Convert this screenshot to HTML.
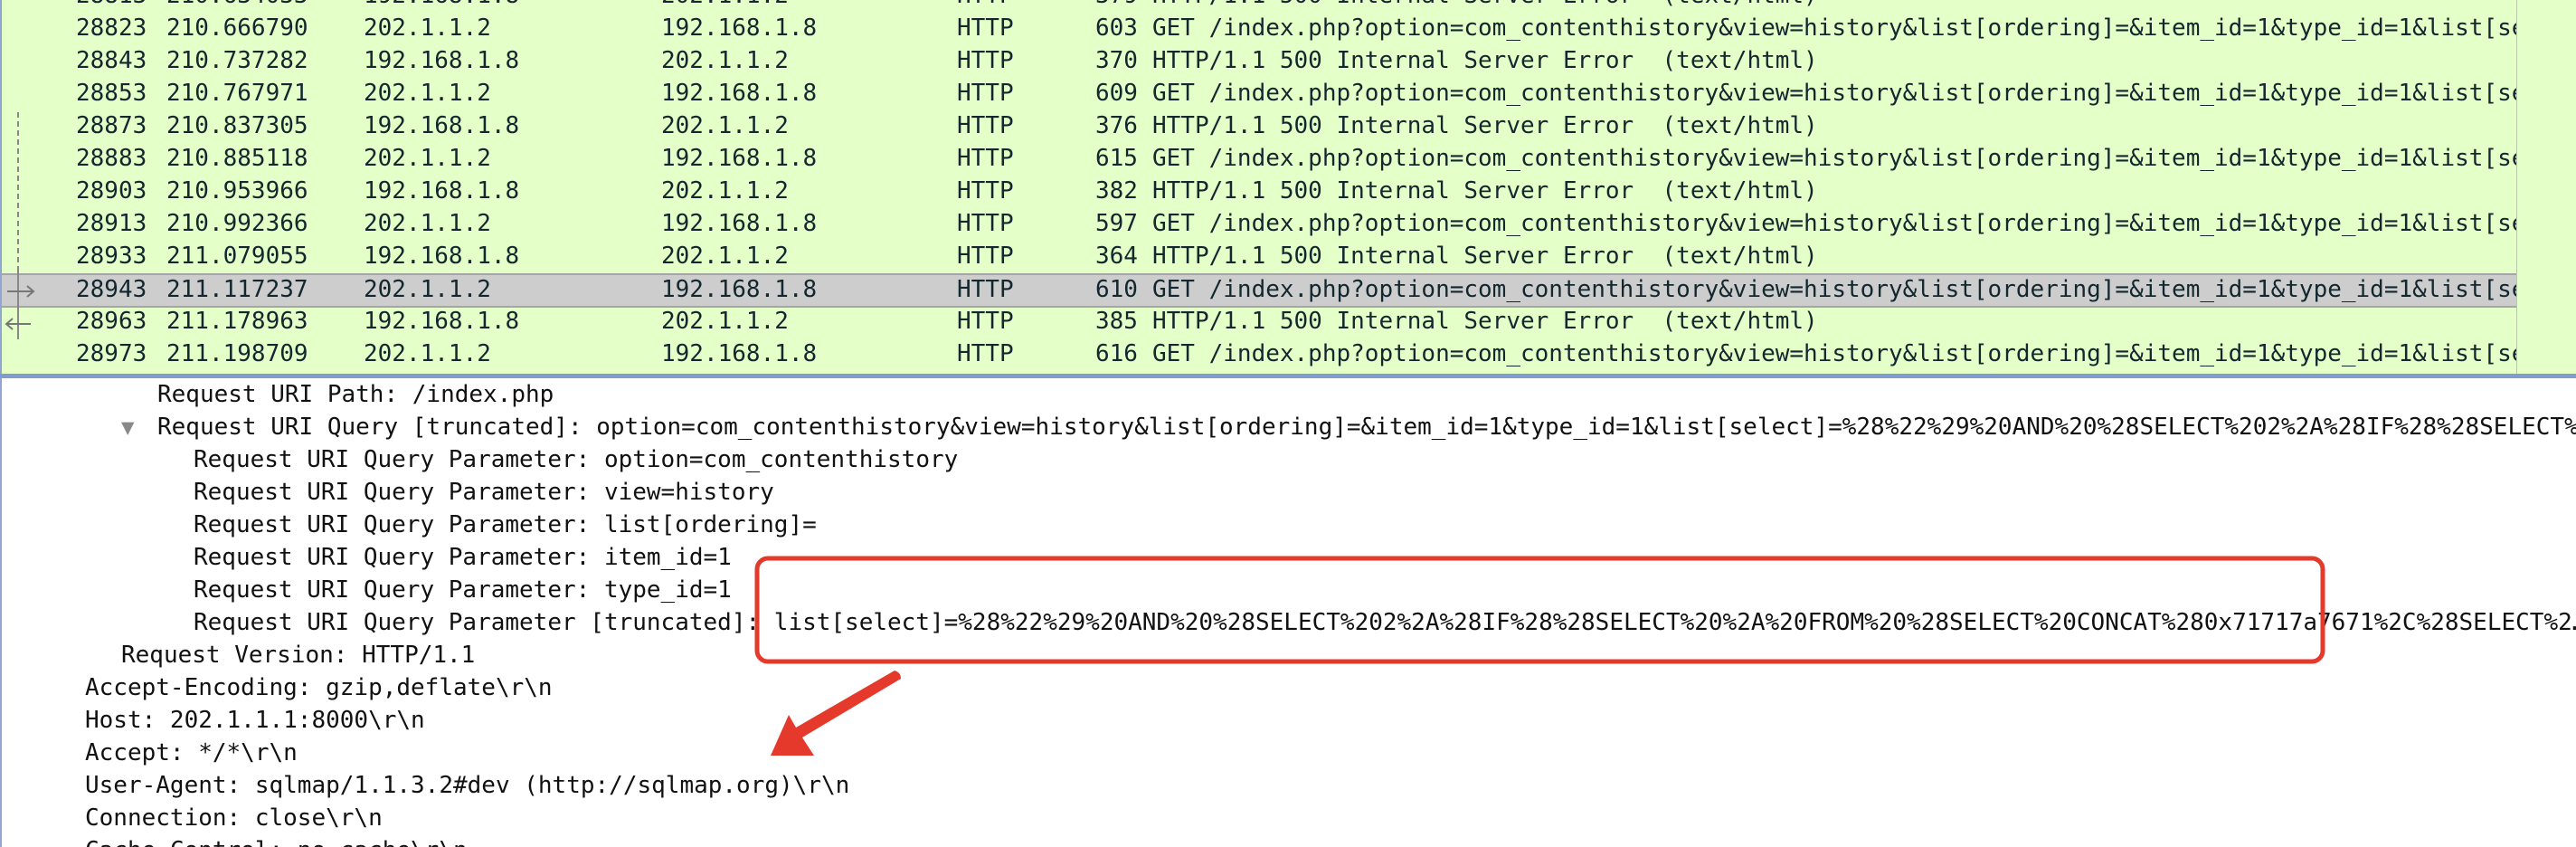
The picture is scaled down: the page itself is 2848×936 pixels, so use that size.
<!DOCTYPE html>
<html><head><meta charset="utf-8">
<style>
html,body{margin:0;padding:0;}
body{width:2848px;height:936px;overflow:hidden;background:#fff;position:relative;font-family:"DejaVu Sans Mono","Liberation Mono",monospace;font-size:26px;color:#12272e;}
#list{position:absolute;left:0;top:0;width:2848px;height:413px;background:#e4ffc7;overflow:hidden;border-left:2px solid #8fa7d0;box-sizing:border-box;}
.r{position:absolute;left:0;width:2780px;height:36px;line-height:36px;white-space:pre;overflow:hidden;}
.r span{position:absolute;top:0;}
.c1{left:82px}.c2{left:182px}.c3{left:400px}.c4{left:729px}.c5{left:1056px}.c6{left:1209px}.c7{left:1272px}
.sel{background:#cdcdcd;border-top:2px solid #a5a5a5;border-bottom:2px solid #a5a5a5;box-sizing:border-box;line-height:32px;}
#vsep{position:absolute;left:2780px;top:0;width:1px;height:413px;background:#b7c9a8;}
#blue{position:absolute;left:0;top:413px;width:2848px;height:5px;background:#7f9dd0;}
#det{position:absolute;left:0;top:418px;width:2848px;height:518px;overflow:hidden;border-left:2px solid #8fa7d0;box-sizing:border-box;}
.d{position:absolute;white-space:pre;height:36px;line-height:36px;color:#111;}
</style></head><body>
<div id="list">
<div class="r" style="top:-23px"><span class="c1">28813</span><span class="c2">210.634033</span><span class="c3">192.168.1.8</span><span class="c4">202.1.1.2</span><span class="c5">HTTP</span><span class="c6">379</span><span class="c7">HTTP/1.1 500 Internal Server Error  (text/html)</span></div>
<div class="r" style="top:13px"><span class="c1">28823</span><span class="c2">210.666790</span><span class="c3">202.1.1.2</span><span class="c4">192.168.1.8</span><span class="c5">HTTP</span><span class="c6">603</span><span class="c7">GET /index.php?option=com_contenthistory&amp;view=history&amp;list[ordering]=&amp;item_id=1&amp;type_id=1&amp;list[select]</span></div>
<div class="r" style="top:49px"><span class="c1">28843</span><span class="c2">210.737282</span><span class="c3">192.168.1.8</span><span class="c4">202.1.1.2</span><span class="c5">HTTP</span><span class="c6">370</span><span class="c7">HTTP/1.1 500 Internal Server Error  (text/html)</span></div>
<div class="r" style="top:85px"><span class="c1">28853</span><span class="c2">210.767971</span><span class="c3">202.1.1.2</span><span class="c4">192.168.1.8</span><span class="c5">HTTP</span><span class="c6">609</span><span class="c7">GET /index.php?option=com_contenthistory&amp;view=history&amp;list[ordering]=&amp;item_id=1&amp;type_id=1&amp;list[select]</span></div>
<div class="r" style="top:121px"><span class="c1">28873</span><span class="c2">210.837305</span><span class="c3">192.168.1.8</span><span class="c4">202.1.1.2</span><span class="c5">HTTP</span><span class="c6">376</span><span class="c7">HTTP/1.1 500 Internal Server Error  (text/html)</span></div>
<div class="r" style="top:157px"><span class="c1">28883</span><span class="c2">210.885118</span><span class="c3">202.1.1.2</span><span class="c4">192.168.1.8</span><span class="c5">HTTP</span><span class="c6">615</span><span class="c7">GET /index.php?option=com_contenthistory&amp;view=history&amp;list[ordering]=&amp;item_id=1&amp;type_id=1&amp;list[select]</span></div>
<div class="r" style="top:193px"><span class="c1">28903</span><span class="c2">210.953966</span><span class="c3">192.168.1.8</span><span class="c4">202.1.1.2</span><span class="c5">HTTP</span><span class="c6">382</span><span class="c7">HTTP/1.1 500 Internal Server Error  (text/html)</span></div>
<div class="r" style="top:229px"><span class="c1">28913</span><span class="c2">210.992366</span><span class="c3">202.1.1.2</span><span class="c4">192.168.1.8</span><span class="c5">HTTP</span><span class="c6">597</span><span class="c7">GET /index.php?option=com_contenthistory&amp;view=history&amp;list[ordering]=&amp;item_id=1&amp;type_id=1&amp;list[select]</span></div>
<div class="r" style="top:265px"><span class="c1">28933</span><span class="c2">211.079055</span><span class="c3">192.168.1.8</span><span class="c4">202.1.1.2</span><span class="c5">HTTP</span><span class="c6">364</span><span class="c7">HTTP/1.1 500 Internal Server Error  (text/html)</span></div>
<div class="r sel" style="top:302px;height:38px"><span class="c1">28943</span><span class="c2">211.117237</span><span class="c3">202.1.1.2</span><span class="c4">192.168.1.8</span><span class="c5">HTTP</span><span class="c6">610</span><span class="c7">GET /index.php?option=com_contenthistory&amp;view=history&amp;list[ordering]=&amp;item_id=1&amp;type_id=1&amp;list[select]</span></div>
<div class="r" style="top:337px"><span class="c1">28963</span><span class="c2">211.178963</span><span class="c3">192.168.1.8</span><span class="c4">202.1.1.2</span><span class="c5">HTTP</span><span class="c6">385</span><span class="c7">HTTP/1.1 500 Internal Server Error  (text/html)</span></div>
<div class="r" style="top:373px"><span class="c1">28973</span><span class="c2">211.198709</span><span class="c3">202.1.1.2</span><span class="c4">192.168.1.8</span><span class="c5">HTTP</span><span class="c6">616</span><span class="c7">GET /index.php?option=com_contenthistory&amp;view=history&amp;list[ordering]=&amp;item_id=1&amp;type_id=1&amp;list[select]</span></div>
<svg style="position:absolute;left:0;top:0" width="60" height="413">
<line x1="18" y1="124" x2="18" y2="300" stroke="#888" stroke-width="2" stroke-dasharray="6,4"/>
<line x1="18" y1="300" x2="18" y2="375" stroke="#888" stroke-width="2"/>
<line x1="6" y1="322" x2="34" y2="322" stroke="#777" stroke-width="2"/>
<path d="M28 316 L35 322 L28 328" fill="none" stroke="#777" stroke-width="2"/>
<line x1="6" y1="358" x2="32" y2="358" stroke="#777" stroke-width="2"/>
<path d="M12 352 L5 358 L12 364" fill="none" stroke="#777" stroke-width="2"/>
</svg>
<div id="vsep"></div>
</div>
<div id="blue"></div>
<div id="det">
<div class="d" style="left:172px;top:0px">Request URI Path: /index.php</div>
<div class="d" style="left:132px;top:36px;color:#888;font-size:24px">▼</div>
<div class="d" style="left:172px;top:36px">Request URI Query [truncated]: option=com_contenthistory&amp;view=history&amp;list[ordering]=&amp;item_id=1&amp;type_id=1&amp;list[select]=%28%22%29%20AND%20%28SELECT%202%2A%28IF%28%28SELECT%…</div>
<div class="d" style="left:212px;top:72px">Request URI Query Parameter: option=com_contenthistory</div>
<div class="d" style="left:212px;top:108px">Request URI Query Parameter: view=history</div>
<div class="d" style="left:212px;top:144px">Request URI Query Parameter: list[ordering]=</div>
<div class="d" style="left:212px;top:180px">Request URI Query Parameter: item_id=1</div>
<div class="d" style="left:212px;top:216px">Request URI Query Parameter: type_id=1</div>
<div class="d" style="left:212px;top:252px">Request URI Query Parameter [truncated]: list[select]=%28%22%29%20AND%20%28SELECT%202%2A%28IF%28%28SELECT%20%2A%20FROM%20%28SELECT%20CONCAT%280x71717a7671%2C%28SELECT%2…</div>
<div class="d" style="left:132px;top:288px">Request Version: HTTP/1.1</div>
<div class="d" style="left:92px;top:324px">Accept-Encoding: gzip,deflate\r\n</div>
<div class="d" style="left:92px;top:360px">Host: 202.1.1.1:8000\r\n</div>
<div class="d" style="left:92px;top:396px">Accept: */*\r\n</div>
<div class="d" style="left:92px;top:432px">User-Agent: sqlmap/1.1.3.2#dev (http://sqlmap.org)\r\n</div>
<div class="d" style="left:92px;top:468px">Connection: close\r\n</div>
<div class="d" style="left:92px;top:504px">Cache-Control: no-cache\r\n</div>
</div>
<svg style="position:absolute;left:0;top:0" width="2848" height="936">
<rect x="837" y="617" width="1731" height="114" rx="12" ry="12" fill="none" stroke="#e5392b" stroke-width="5"/>
<path d="M989 741 Q996 743 996 750 L887 815 L900 835 L852 835 L872 790 L880 804 Z" fill="#e5392b"/>
</svg>
</body></html>
